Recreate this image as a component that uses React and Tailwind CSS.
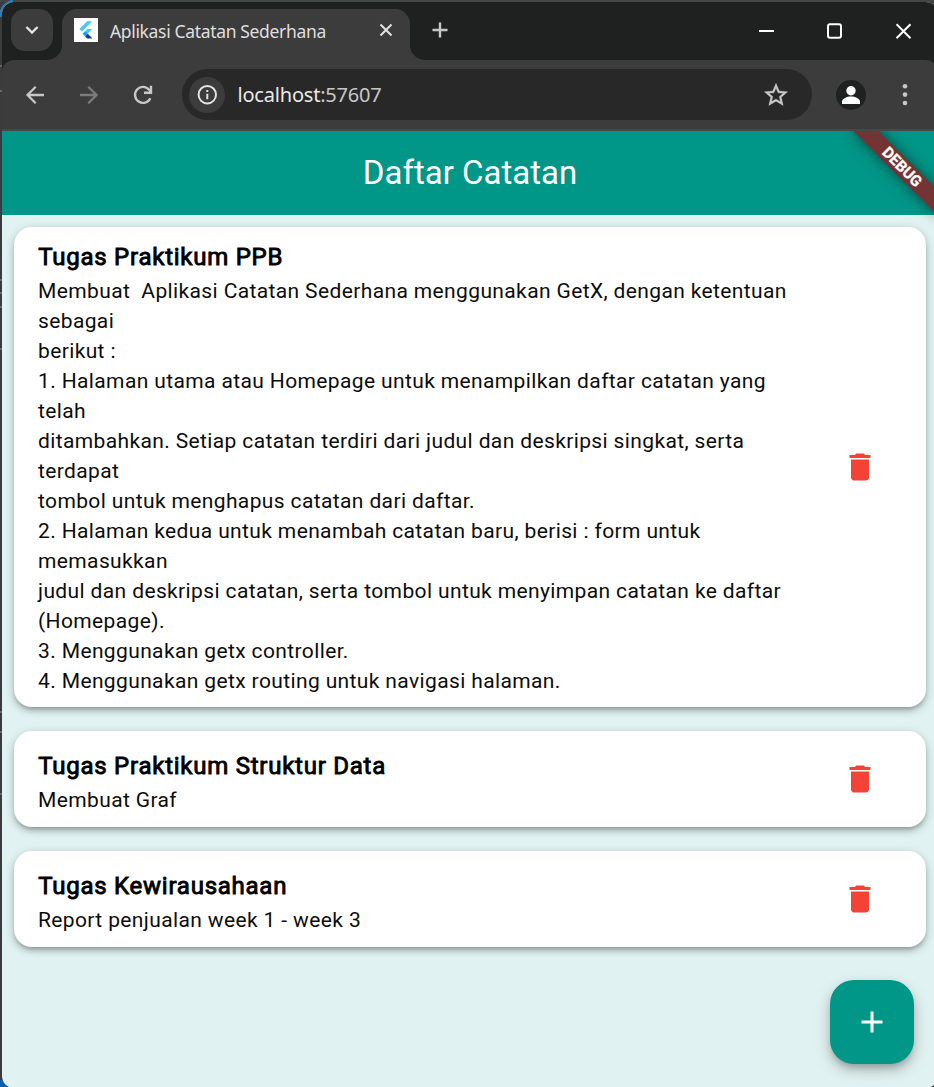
import React from "react";

const NOTES = [
  {
    title: "Tugas Praktikum PPB",
    body: [
      "Membuat  Aplikasi Catatan Sederhana menggunakan GetX, dengan ketentuan",
      "sebagai",
      "berikut :",
      "1. Halaman utama atau Homepage untuk menampilkan daftar catatan yang",
      "telah",
      "ditambahkan. Setiap catatan terdiri dari judul dan deskripsi singkat, serta",
      "terdapat",
      "tombol untuk menghapus catatan dari daftar.",
      "2. Halaman kedua untuk menambah catatan baru, berisi : form untuk",
      "memasukkan",
      "judul dan deskripsi catatan, serta tombol untuk menyimpan catatan ke daftar",
      "(Homepage).",
      "3. Menggunakan getx controller.",
      "4. Menggunakan getx routing untuk navigasi halaman.",
    ],
  },
  { title: "Tugas Praktikum Struktur Data", body: ["Membuat Graf"] },
  { title: "Tugas Kewirausahaan", body: ["Report penjualan week 1 - week 3"] },
];

function TabStrip() {
  return (
    <div className="flex h-[58px] shrink-0 bg-[#1f2120] pl-[9px]">
      <button className="mt-[7px] flex size-[42px] items-center justify-center rounded-[14px] bg-[#3c3c3c]">
        <svg width="16" height="16" viewBox="0 0 16 16" fill="none" stroke="#e3e3e3" strokeWidth="2.4">
          <path d="M2.4 5 8 10.600 13.600 5" />
        </svg>
      </button>
      <div className="relative mt-[7px] ml-[9px] flex h-[51px] w-[348px] items-center rounded-t-[15px] bg-[#3c3c3c] pr-4 pb-[7px] pl-3">
        <svg className="absolute bottom-0 -left-[15px]" width="15" height="15" viewBox="0 0 15 15">
          <path d="M15 0v15H0A15 15 0 0 0 15 0Z" fill="#3c3c3c" />
        </svg>
        <svg className="absolute -right-[15px] bottom-0" width="15" height="15" viewBox="0 0 15 15">
          <path d="M0 0v15h15A15 15 0 0 1 0 0Z" fill="#3c3c3c" />
        </svg>
        <svg className="-mt-[2px] shrink-0" width="24" height="24" viewBox="0 0 24 24">
          <rect width="24" height="24" fill="#fff" />
          <path d="M13.2 3.2h5.1L8 13.6 5.4 11Z" fill="#45c8fb" />
          <path d="M13.2 11.1h5.1l-4.7 4.7-4.7 0Z" fill="#45c8fb" />
          <path d="m8.6 15.8 2.6-2.6 2.6 2.6-2.6 2.6Z" fill="#1f9df0" />
          <path d="m11.2 18.4 2.6-2.6 4.6 4.7h-5.2Z" fill="#0b3c96" />
        </svg>
        <span className="ml-3 flex-1 font-['Noto_Sans'] text-[17.5px] leading-6 tracking-[-0.34px] whitespace-nowrap text-[#dfdfdf]">
          Aplikasi Catatan Sederhana
        </span>
        <svg className="-mt-[2px] shrink-0" width="16" height="16" viewBox="0 0 16 16" stroke="#e3e3e3" strokeWidth="2">
          <path d="m2.5 2.5 11 11m0-11-11 11" />
        </svg>
      </div>
      <div className="flex h-[56px] flex-1 items-center pl-[22px]">
        <svg width="16" height="16" viewBox="0 0 16 16" stroke="#c7c7c7" strokeWidth="2.4">
          <path d="M8 .5v15M.5 8h15" />
        </svg>
      </div>
      <div className="flex h-[58px] items-center">
        <div className="flex w-[68px] justify-center">
          <svg width="16" height="16" viewBox="0 0 16 16" stroke="#fff" strokeWidth="2">
            <path d="M0 8h15" />
          </svg>
        </div>
        <div className="flex w-[68px] justify-center">
          <svg width="16" height="16" viewBox="0 0 16 16" fill="none" stroke="#fff" strokeWidth="2">
            <rect x="1" y="1.300" width="13" height="13.400" rx="2" />
          </svg>
        </div>
        <div className="flex w-[69px] justify-center">
          <svg width="16" height="16" viewBox="0 0 16 16" stroke="#fff" strokeWidth="2">
            <path d="m.5 1.200 14 14M14.500 1.200l-14 14" />
          </svg>
        </div>
      </div>
    </div>
  );
}

function Toolbar() {
  return (
    <div className="shrink-0 bg-[#1f2120]">
      <div className="flex h-[71px] items-center rounded-t-xl border-b-2 border-[#484848] bg-[#3c3c3c] pl-[19px]">
        <div className="flex w-[161px] gap-[26px]">
          <svg width="28" height="28" viewBox="0 0 28 28" fill="none" stroke="#c7c7c7" strokeWidth="2.3">
            <path d="M23 14H6.500m8.200-8.200L6.500 14l8.200 8.200" />
          </svg>
          <svg width="28" height="28" viewBox="0 0 28 28" fill="none" stroke="#7b7b7b" strokeWidth="2.3">
            <path d="M5 14h16.500m-8.200-8.200 8.200 8.200-8.200 8.200" />
          </svg>
          <svg width="28" height="28" viewBox="0 0 28 28" fill="none" stroke="#c7c7c7" strokeWidth="2.4">
            <path d="M21.300 17.200A8 8 0 1 1 20.200 8.800L22 11.100" />
            <path d="M22 4.800v7h-7" />
          </svg>
        </div>
        <div className="flex h-[51px] w-[630px] items-center rounded-full bg-[#282828] pr-[22px] pl-[7px]">
          <span className="flex size-9 items-center justify-center rounded-full bg-[#3c3c3c]">
            <svg width="20" height="20" viewBox="0 0 20 20" fill="none" stroke="#e3e3e3" strokeWidth="2">
              <circle cx="10.300" cy="9.700" r="8.700" />
              <path d="M10.300 8.700v5.500M10.300 5v2" />
            </svg>
          </span>
          <span className="ml-[12.500px] flex-1 font-['Noto_Sans'] text-[20px] leading-7 tracking-[-0.2px] text-[#e8e8e8]">
            localhost<span className="text-[#c7c7c7]">:57607</span>
          </span>
          <svg width="28" height="28" viewBox="0 0 24 24" fill="#c7c7c7" stroke="#c7c7c7" strokeWidth="0.300">
            <path d="m22 9.240-7.190-.62L12 2 9.190 8.630 2 9.240l5.460 4.730L5.820 21 12 17.270 18.180 21l-1.630-7.030L22 9.240zM12 15.400l-3.760 2.270 1-4.280-3.320-2.880 4.380-.38L12 6.100l1.710 4.040 4.380.38-3.320 2.880 1 4.280L12 15.400z" />
          </svg>
        </div>
        <svg className="ml-6" width="30" height="30" viewBox="0 0 30 30">
          <circle cx="15" cy="15" r="15" fill="#1f2120" />
          <circle cx="15" cy="10.700" r="4.700" fill="#fff" />
          <path d="M6 24v-2.300c0-3.200 5-5.200 9-5.200s9 2 9 5.200V24Z" fill="#fff" />
        </svg>
        <svg className="ml-[33px]" width="12" height="24" viewBox="0 0 12 24" fill="#c7c7c7">
          <circle cx="6" cy="3.300" r="2.300" />
          <circle cx="6" cy="11.600" r="2.300" />
          <circle cx="6" cy="20" r="2.300" />
        </svg>
      </div>
    </div>
  );
}

function Note({ note }) {
  return (
    <article
      className={`flex items-center rounded-[18px] bg-white pr-12 pl-6 shadow-[0_4px_5px_-2px_rgba(0,0,0,0.25),0_3px_10px_0_rgba(0,0,0,0.24)] ${
        note.body.length > 1 ? "h-[480px]" : "h-24"
      }`}
    >
      <div className={`flex-1 ${note.body.length > 1 ? "" : "pt-1"}`}>
        <h2 className="pl-[0.300px] text-[24px] leading-9 font-normal tracking-[0.75px] [-webkit-text-stroke:0.9px_#000]">
          {note.title}
        </h2>
        <div className="-mb-px pt-px">
          {note.body.map((line) => (
            <p key={line} className="text-[21px] leading-[30px] tracking-[0.375px] whitespace-pre text-[#0c0c0c]">
              {line}
            </p>
          ))}
        </div>
      </div>
      <button aria-label="Hapus">
        <svg width="36" height="36" viewBox="0 0 24 24" fill="#f44336">
          <path d="M6 19c0 1.100.9 2 2 2h8c1.100 0 2-.9 2-2V7H6v12zM19 4h-3.500l-1-1h-5l-1 1H5v2h14V4z" />
        </svg>
      </button>
    </article>
  );
}

export default function App() {
  return (
    <div className="relative h-[1087px] w-[934px] overflow-hidden bg-[#3b3b3d] pt-[2px] pl-[2px]">
      <svg className="absolute top-0 left-0" width="934" height="1087" viewBox="0 0 934 1087" fill="none">
        <path d="M0 0h934v2H0z" fill="#454545" />
        <path d="M0 17C1 8 5 3 13 1" stroke="#2f7fb5" strokeWidth="3" />
        <path d="M0 1080h14v7H0z" fill="#0c5ca8" />
        <path d="M920 1076h14v11h-14z" fill="#252525" />
        <path d="M0 66h2M0 91h2M0 280h2M0 293h2M0 307h2M0 349h2M0 712h2M0 732h2M0 794h2" stroke="#777" strokeWidth="1.500" />
      </svg>
      <div className="relative flex h-[1086px] w-[936px] flex-col overflow-hidden rounded-xl bg-[#e0f2f1]">
        <TabStrip />
        <Toolbar />
        <main className="relative flex flex-1 flex-col overflow-hidden font-[Roboto,sans-serif] text-black">
          <header className="flex h-[84px] shrink-0 items-center justify-center bg-[#009688]">
            <h1 className="text-[33px] leading-[42px] text-white">Daftar Catatan</h1>
          </header>
          <div className="flex flex-col gap-6 p-3">
            {NOTES.map((note) => (
              <Note key={note.title} note={note} />
            ))}
          </div>
          <div className="absolute top-[42px] -right-[60px] flex h-[18px] w-[120px] origin-[60px_-42px] rotate-45 items-center justify-center bg-[#743433] text-[15.300px] leading-[18px] font-bold text-white shadow-[0_0_14px_rgba(0,0,0,0.5)] [-webkit-text-stroke:0.3px_#fff]">
            DEBUG
          </div>
          <button
            aria-label="Tambah"
            className="absolute right-6 bottom-6 flex size-[84px] items-center justify-center rounded-[24px] bg-[#009688] shadow-[0_5px_7px_-2px_rgba(0,0,0,0.22),0_6px_16px_0_rgba(0,0,0,0.22)]"
          >
            <svg width="36" height="36" viewBox="0 0 24 24" fill="#fff">
              <path d="M19 13h-6v6h-2v-6H5v-2h6V5h2v6h6v2z" />
            </svg>
          </button>
        </main>
      </div>
    </div>
  );
}
